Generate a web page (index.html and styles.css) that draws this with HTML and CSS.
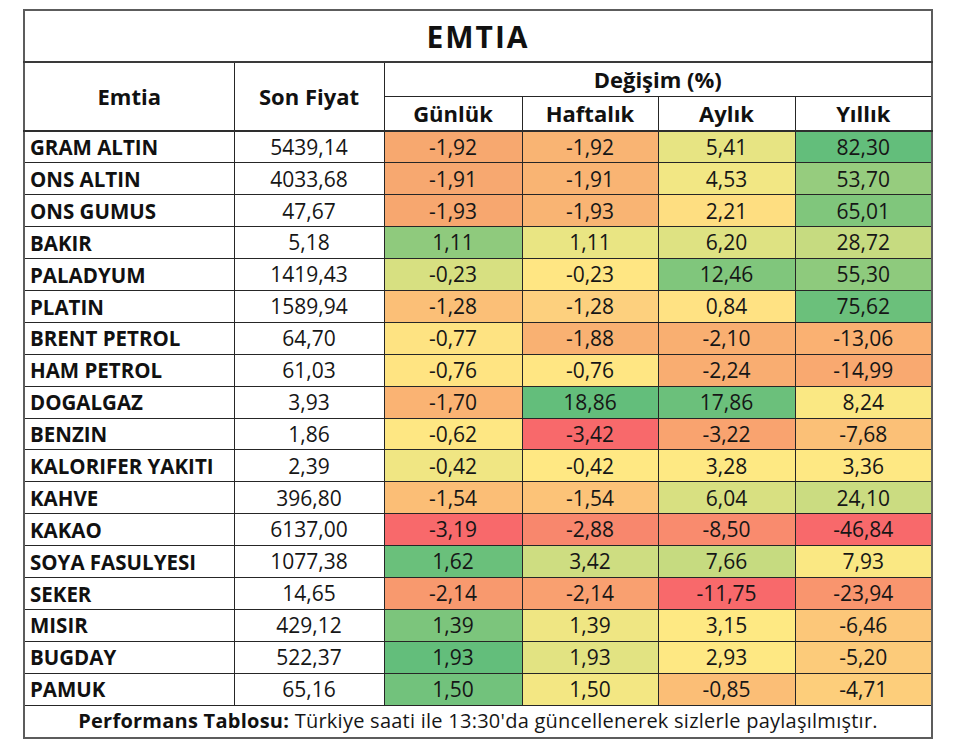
FILE: index.html
```html
<!DOCTYPE html>
<html lang="tr">
<head>
<meta charset="utf-8">
<title>EMTIA</title>
<link rel="stylesheet" href="styles.css">
</head>
<body>
<div class="wrap">
<table class="perf">
<colgroup>
<col class="c-name"><col class="c-price"><col class="c-d"><col class="c-w"><col class="c-m"><col class="c-y">
</colgroup>
<thead>
<tr class="title-row"><th colspan="6" class="title">EMTIA</th></tr>
<tr class="h1"><th rowspan="2" class="h-bottom">Emtia</th><th rowspan="2" class="h-bottom">Son Fiyat</th><th colspan="4">Değişim (%)</th></tr>
<tr class="h2"><th class="h-bottom">Günlük</th><th class="h-bottom">Haftalık</th><th class="h-bottom">Aylık</th><th class="h-bottom">Yıllık</th></tr>
</thead>
<tbody>
<tr><td class="name">GRAM ALTIN</td><td class="price">5439,14</td><td style="background:#F7A86F">-1,92</td><td style="background:#F9B473">-1,92</td><td style="background:#E7E483">5,41</td><td style="background:#63BE7B">82,30</td></tr>
<tr><td class="name">ONS ALTIN</td><td class="price">4033,68</td><td style="background:#F7A870">-1,91</td><td style="background:#F9B473">-1,91</td><td style="background:#F2E784">4,53</td><td style="background:#96CC7E">53,70</td></tr>
<tr><td class="name">ONS GUMUS</td><td class="price">47,67</td><td style="background:#F7A76F">-1,93</td><td style="background:#F9B473">-1,93</td><td style="background:#FEDE81">2,21</td><td style="background:#80C67C">65,01</td></tr>
<tr><td class="name">BAKIR</td><td class="price">5,18</td><td style="background:#8FCA7D">1,11</td><td style="background:#E9E583">1,11</td><td style="background:#DEE282">6,20</td><td style="background:#C6DB80">28,72</td></tr>
<tr><td class="name">PALADYUM</td><td class="price">1419,43</td><td style="background:#D7E081">-0,23</td><td style="background:#FFE683">-0,23</td><td style="background:#80C67C">12,46</td><td style="background:#8ECA7D">55,30</td></tr>
<tr><td class="name">PLATIN</td><td class="price">1589,94</td><td style="background:#FBBF77">-1,28</td><td style="background:#FDD07E">-1,28</td><td style="background:#FFE283">0,84</td><td style="background:#6BC07B">75,62</td></tr>
<tr><td class="name">BRENT PETROL</td><td class="price">64,70</td><td style="background:#FEE382">-0,77</td><td style="background:#F9B172">-1,88</td><td style="background:#F9AF71">-2,10</td><td style="background:#FAB172">-13,06</td></tr>
<tr><td class="name">HAM PETROL</td><td class="price">61,03</td><td style="background:#FFE482">-0,76</td><td style="background:#FFE683">-0,76</td><td style="background:#F9AD71">-2,24</td><td style="background:#F9A970">-14,99</td></tr>
<tr><td class="name">DOGALGAZ</td><td class="price">3,93</td><td style="background:#FAB373">-1,70</td><td style="background:#63BE7B">18,86</td><td style="background:#6BC07B">17,86</td><td style="background:#FAE883">8,24</td></tr>
<tr><td class="name">BENZIN</td><td class="price">1,86</td><td style="background:#FEE783">-0,62</td><td style="background:#F8696B">-3,42</td><td style="background:#F9A36F">-3,22</td><td style="background:#FBC077">-7,68</td></tr>
<tr><td class="name">KALORIFER YAKITI</td><td class="price">2,39</td><td style="background:#F0E683">-0,42</td><td style="background:#FFE883">-0,42</td><td style="background:#FEE983">3,28</td><td style="background:#FEE883">3,36</td></tr>
<tr><td class="name">KAHVE</td><td class="price">396,80</td><td style="background:#FBBE76">-1,54</td><td style="background:#FCC378">-1,54</td><td style="background:#D8E081">6,04</td><td style="background:#CBDC81">24,10</td></tr>
<tr><td class="name">KAKAO</td><td class="price">6137,00</td><td style="background:#F8696B">-3,19</td><td style="background:#F8876D">-2,88</td><td style="background:#F98B6E">-8,50</td><td style="background:#F8696B">-46,84</td></tr>
<tr><td class="name">SOYA FASULYESI</td><td class="price">1077,38</td><td style="background:#6AC07B">1,62</td><td style="background:#CEDD81">3,42</td><td style="background:#C6DB80">7,66</td><td style="background:#FAE883">7,93</td></tr>
<tr><td class="name">SEKER</td><td class="price">14,65</td><td style="background:#F8996E">-2,14</td><td style="background:#F9A070">-2,14</td><td style="background:#F8696B">-11,75</td><td style="background:#F9956E">-23,94</td></tr>
<tr><td class="name">MISIR</td><td class="price">429,12</td><td style="background:#7CC57C">1,39</td><td style="background:#EFE683">1,39</td><td style="background:#FEE983">3,15</td><td style="background:#FCC779">-6,46</td></tr>
<tr><td class="name">BUGDAY</td><td class="price">522,37</td><td style="background:#63BE7B">1,93</td><td style="background:#E2E382">1,93</td><td style="background:#FEE883">2,93</td><td style="background:#FCCB7A">-5,20</td></tr>
<tr><td class="name">PAMUK</td><td class="price">65,16</td><td style="background:#72C27C">1,50</td><td style="background:#F3E783">1,50</td><td style="background:#FBBE76">-0,85</td><td style="background:#FDCE7B">-4,71</td></tr>
</tbody>
<tfoot>
<tr><td colspan="6" class="foot"><b>Performans Tablosu:</b> Türkiye saati ile 13:30'da güncellenerek sizlerle paylaşılmıştır.</td></tr>
</tfoot>
</table>
</div>
</body>
</html>
```

FILE: styles.css
```css
html, body {
  margin: 0;
  padding: 0;
  background: #ffffff;
}

body {
  font-family: "Open Sans", "Liberation Sans", sans-serif;
  color: #161616;
}

.wrap {
  padding: 9px 0 0 23px;
}

.perf {
  width: 908px;
  table-layout: fixed;
  border-collapse: collapse;
  border: 2px solid #5c5c5c;
}

.c-name { width: 210px; }
.c-price { width: 150px; }
.c-d { width: 138px; }
.c-w { width: 136px; }
.c-m { width: 137px; }
.c-y { width: 137px; }

.perf th,
.perf td {
  border: 1px solid #262626;
  padding: 0;
  text-align: center;
  vertical-align: middle;
  line-height: 1.3;
}

.perf th {
  font-weight: 700;
  color: #111111;
}

.title-row th {
  height: 50px;
  font-size: 30px;
  letter-spacing: 2px;
  border-bottom: 2px solid #3a3a3a;
}

.h1 th,
.h2 th {
  height: 33px;
  font-size: 22px;
}

.h-bottom {
  border-bottom: 2px solid #2e2e2e !important;
}

.perf tbody tr {
  height: 31.9px;
}

.perf tbody td {
  font-size: 21px;
  font-weight: 500;
  padding-top: 1px;
}

.perf td.name {
  text-align: left;
  padding-left: 5px;
  font-size: 20.5px;
  font-weight: 700;
  color: #111111;
}

.perf td.foot {
  height: 31px;
  font-size: 20px;
  font-weight: 500;
  letter-spacing: 0.25px;
  background: #ffffff;
}

.foot b {
  font-weight: 700;
  color: #111111;
}
```
